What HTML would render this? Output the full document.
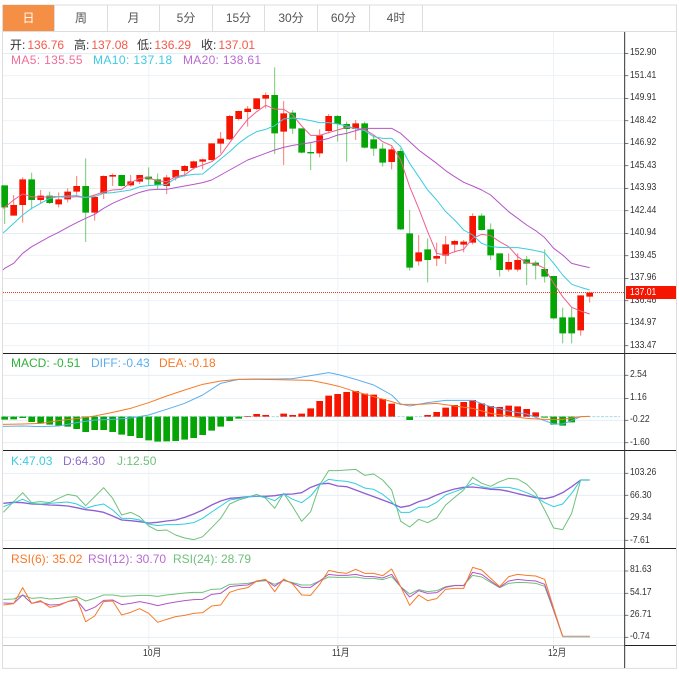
<!DOCTYPE html>
<html><head><meta charset="utf-8"><title>K线</title>
<style>
html,body{margin:0;padding:0;background:#fff;width:679px;height:679px;overflow:hidden}
#w{position:relative;width:679px;height:679px;overflow:hidden;background:#fff;font-family:"Liberation Sans","Noto Sans CJK SC",sans-serif}
svg{position:absolute;left:0;top:0;display:block}
.t{position:absolute;top:5px;height:26px;line-height:26px;text-align:center;font-size:12px;color:#555}
.l{position:absolute;font-size:12px;line-height:14px;white-space:pre}
.l span{padding-left:2px}
.a{position:absolute;left:630px;font-size:10px;line-height:12px;color:#333;white-space:pre;transform:scaleX(.86);transform-origin:left center}
.x{position:absolute;top:648px;font-size:10px;line-height:12px;color:#333;white-space:pre;transform:scaleX(.86);transform-origin:left center}
</style></head><body><div id="w">
<svg width="679" height="679" viewBox="0 0 2037 2037" fill="none">
<!-- frame -->
<path d="M7.5 15H2029.5V2005H7.5Z" stroke="#ddd" stroke-width="3"/>
<rect x="9" y="15" width="153" height="78" fill="#f58f45"/>
<path d="M9 94.5H2028M163.5 15V93M322.5 15V93M478.5 15V93M637.5 15V93M793.5 15V93M952.5 15V93M1108.5 15V93M1267.5 15V93" stroke="#ddd" stroke-width="3"/>
<!-- vertical grid -->
<path d="M446.5 96V1935M1013.5 96V1935M1660.5 96V1935" stroke="#edf3f6" stroke-width="3"/>
<!-- price grid -->
<path d="M9 160.5H1872M9 295.5H1872M9 430.5H1872M9 565.5H1872M9 700.5H1872M9 835.5H1872M9 970.5H1872" stroke="#e4edf4" stroke-width="3"/>
<path d="M9 227H1872M9 362H1872M9 497H1872M9 632H1872M9 767H1872M9 902H1872M9 1037H1872" stroke="#eef3f7" stroke-width="3"/>
<!-- macd grid -->
<path d="M9 1126H1872M9 1195.5H1872M9 1261H1872M9 1328H1872" stroke="#e8eff5" stroke-width="3"/>
<!-- kdj grid -->
<path d="M9 1420H1872M9 1486H1872M9 1555H1872M9 1621H1872" stroke="#e8eff5" stroke-width="3"/>
<!-- rsi grid -->
<path d="M9 1713H1872M9 1780H1872M9 1846H1872M9 1912H1872" stroke="#e8eff5" stroke-width="3"/>
<!-- axis ticks -->
<path d="M1875 160.5h10M1875 227h10M1875 295.5h10M1875 362h10M1875 430.5h10M1875 497h10M1875 565.5h10M1875 632h10M1875 700.5h10M1875 767h10M1875 835.5h10M1875 902h10M1875 970.5h10M1875 1037h10M1875 1126h10M1875 1195.5h10M1875 1261h10M1875 1328h10M1875 1420h10M1875 1486h10M1875 1555h10M1875 1621h10M1875 1713h10M1875 1780h10M1875 1846h10M1875 1912h10M446.5 1938v8M1013.5 1938v8M1660.5 1938v8" stroke="#777" stroke-width="3"/>

<!-- candle wicks -->
<path stroke="#f51200" stroke-width="3" opacity=".55" d="M41 585V647M68 532V668M122 570V612M176 577V622M203 565V607M230 528V590M284 585V662M311 526V597M338 520V558M392 525V560M419 525V552M500 525V582M527 510V542M554 495V530M581 482V508M608 476V508M635 430V482M662 396V460M689 345V420M716 332V362M743 318V380M770 295V330M797 277V325M851 303V495M959 388V472M986 342V400M1067 360V420M1175 440V508M1256 705V797M1310 728V798M1337 708V792M1364 720V758M1391 720V757M1418 640V733M1526 760V815M1553 760V815M1742 886V1007M1769 875V908"/>
<path stroke="#04a504" stroke-width="3" opacity=".55" d="M14 556V672M95 518V628M149 575V612M257 475V726M365 525V560M446 502V555M473 520V568M824 202V462M878 330V402M905 385V460M932 430V510M1013 345V425M1040 365V485M1094 365V445M1121 405V468M1148 430V500M1202 445V690M1229 630V812M1283 715V847M1445 640V692M1472 670V780M1499 760V830M1580 768V855M1607 782V838M1634 748V848M1661 828V958M1688 923V1030M1715 923V1030"/>
<!-- candle bodies -->
<path stroke="#f61400" stroke-width="20" d="M41 615V647M68 538V615M122 587V600M176 598V613M203 575V598M230 558V575M284 591V638M311 528V580M338 525V530M392 544V556M419 525V545M500 532V558M527 510V532M554 498V513M581 484V504M608 478V485M635 430V480M662 416V431M689 348V418M716 333V357M743 326V336M770 295V327M797 285V296M851 340V395M959 406V460M986 348V393M1067 370V387M1175 448V486M1256 757V784M1310 768V776M1337 733V767M1364 723V734M1391 725V734M1418 648V728M1526 786V809M1553 780V809M1742 886V991M1769 878V890"/>
<path stroke="#04a504" stroke-width="20" d="M14 556V622M95 538V600M149 587V609M257 558V638M365 525V558M446 530V538M473 538V556M824 285V400M878 338V386M905 385V458M932 456V460M1013 348V372M1040 372V387M1094 370V443M1121 418V446M1148 446V488M1202 453V688M1229 700V803M1283 748V780M1445 647V690M1472 688V766M1499 760V810M1580 778V791M1607 788V797M1634 807V830M1661 828V955M1688 952V1000M1715 952V1000"/>
<!-- MA -->
<polyline stroke="#ef5f8c" stroke-width="3" stroke-linejoin="round" points="9,625 14,622 41,600 68,582 95,590 122,592 149,590 176,590 203,592 230,590 257,593 284,585 311,576 338,570 365,568 392,548 419,535 446,533 473,543 500,545 527,530 554,525 581,505 608,495 635,485 662,465 689,428 716,392 743,358 770,335 797,316 824,327 851,328 878,345 905,378 932,406 959,406 986,398 1013,390 1040,382 1067,385 1094,388 1121,405 1148,425 1175,437 1202,480 1229,560 1256,625 1283,695 1310,760 1337,765 1364,755 1391,748 1418,715 1445,703 1472,707 1499,725 1526,740 1553,770 1580,788 1607,792 1634,805 1661,850 1688,890 1715,922 1742,933 1769,942"/>
<polyline stroke="#3ccbe0" stroke-width="3" stroke-linejoin="round" points="9,698 14,695 41,670 68,645 95,625 122,610 149,595 176,590 203,588 230,587 257,592 284,590 311,580 338,578 365,574 392,570 419,560 446,557 473,555 500,553 527,535 554,527 581,523 608,522 635,500 662,477 689,455 716,430 743,410 770,395 797,388 824,377 851,357 878,354 905,357 932,362 959,368 986,368 1013,372 1040,378 1067,386 1094,392 1121,410 1148,415 1175,415 1202,440 1229,490 1256,530 1283,570 1310,600 1337,635 1364,660 1391,690 1418,705 1445,730 1472,740 1499,742 1526,743 1553,743 1580,747 1607,752 1634,758 1661,790 1688,825 1715,853 1742,862 1769,870"/>
<polyline stroke="#b455c8" stroke-width="3" stroke-linejoin="round" points="9,810 14,805 41,790 68,760 95,740 122,725 149,710 176,697 203,682 230,668 257,655 284,643 311,625 338,610 365,598 392,587 419,577 446,570 473,568 500,568 527,563 554,558 581,553 608,548 635,540 662,525 689,510 716,495 743,480 770,470 797,460 824,450 851,442 878,436 905,432 932,428 959,422 986,415 1013,405 1040,400 1067,392 1094,385 1121,385 1148,385 1175,385 1202,400 1229,425 1256,450 1283,470 1310,490 1337,512 1364,530 1391,547 1418,558 1445,570 1472,585 1499,610 1526,635 1553,655 1580,675 1607,692 1634,713 1661,745 1688,765 1715,790 1742,797 1769,803"/>
<!-- last price dotted -->
<path d="M9 877.5H1872" stroke="#f33a2a" stroke-width="3" stroke-dasharray="3 3"/>

<!-- MACD -->
<g transform="translate(0 1050)">
<path d="M9 200H1860" stroke="#a4dcec" stroke-width="3" stroke-dasharray="9 4"/>
<path stroke="#04a504" stroke-width="20" d="M14 200V209M41 200V208M68 200V204M95 200V216M122 200V221M149 200V224M176 200V227M203 200V230M230 200V237M257 200V246M284 200V240M311 200V240M338 200V246M365 200V254M392 200V258M419 200V264M446 200V271M473 200V275M500 200V274M527 200V273M554 200V269M581 200V264M608 200V255M635 200V242M662 200V230M689 200V213M716 200V206M1229 200V210M1634 200V203M1661 200V224M1688 200V227M1715 200V217"/>
<path stroke="#f61400" stroke-width="20" d="M743 198V200M770 192V200M797 195V200M851 191V200M878 195V200M905 191V200M932 175V200M959 153V200M986 137V200M1013 132V200M1040 126V200M1067 123V200M1094 131V200M1121 134V200M1148 147V200M1175 161V200M1283 195V200M1310 186V200M1337 173V200M1364 165V200M1391 156V200M1418 150V200M1445 160V200M1472 168V200M1499 171V200M1526 167V200M1553 169V200M1580 177V200M1607 187V200"/>
<polyline stroke="#5aaef0" stroke-width="3" stroke-linejoin="round" points="9,229 68,228 122,230 176,228 230,218 284,210 338,208 392,204 446,195 500,178 554,160 608,135 662,100 716,88 770,87 824,87 878,86 932,77 986,68 1020,75 1067,88 1121,105 1175,135 1202,162 1229,168 1283,158 1337,151 1418,151 1472,170 1526,183 1580,192 1634,212 1661,222 1688,222 1715,212 1742,200 1769,199"/>
<polyline stroke="#f77a28" stroke-width="3" stroke-linejoin="round" points="9,223 68,222 122,220 176,212 230,206 284,198 338,187 392,175 446,158 500,138 554,120 608,103 662,93 716,88 770,88 824,89 878,90 932,91 986,102 1020,110 1067,125 1121,140 1175,155 1202,163 1256,163 1310,160 1364,168 1418,175 1472,190 1526,198 1580,205 1634,208 1688,208 1742,200 1769,199"/>
</g>

<!-- KDJ -->
<g transform="translate(0 1350)" stroke-width="3" stroke-linejoin="round">
<polyline stroke="#6fc07a" points="10,187 41,155 68,128 95,158 122,155 149,158 176,145 203,133 230,138 257,167 284,140 311,113 338,145 365,195 392,187 419,200 446,228 473,242 500,240 527,255 554,264 581,269 608,260 635,233 662,205 689,162 716,150 743,142 770,133 797,145 824,175 851,130 878,170 905,214 932,185 959,105 986,62 1013,62 1040,60 1067,58 1094,76 1121,72 1148,90 1175,120 1202,214 1229,231 1256,208 1283,218 1310,204 1337,165 1364,142 1391,120 1418,82 1445,100 1472,109 1499,95 1526,85 1553,87 1580,103 1607,130 1634,180 1661,234 1688,239 1715,190 1742,90 1769,90"/>
<polyline stroke="#8f5fd0" stroke-width="4" points="10,160 41,157 68,158 95,162 122,163 149,165 176,166 203,168 230,173 257,179 284,182 311,187 338,198 365,210 392,212 419,215 446,219 473,217 500,213 527,210 554,202 581,192 608,180 635,165 662,153 689,145 716,143 743,140 770,139 797,139 824,137 851,133 878,132 905,128 932,112 959,102 986,100 1013,108 1040,110 1067,120 1094,130 1121,140 1148,150 1175,160 1202,172 1229,167 1256,155 1283,147 1310,135 1337,125 1364,117 1391,112 1418,111 1445,114 1472,118 1499,119 1526,124 1553,131 1580,137 1607,143 1634,146 1661,140 1688,128 1715,110 1742,90 1769,90"/>
<polyline stroke="#30cde0" points="10,170 41,158 68,148 95,160 122,162 149,160 176,158 203,156 230,162 257,175 284,167 311,162 338,180 365,205 392,205 419,210 446,222 473,227 500,224 527,224 554,222 581,218 608,205 635,186 662,168 689,150 716,146 743,140 770,138 797,142 824,152 851,132 878,148 905,158 932,138 959,105 986,88 1013,92 1040,94 1067,101 1094,114 1121,118 1148,133 1175,155 1202,187 1229,187 1256,172 1283,171 1310,157 1337,135 1364,125 1391,115 1418,100 1445,110 1472,115 1499,112 1526,112 1553,118 1580,128 1607,140 1634,158 1661,170 1688,162 1715,130 1742,90 1769,90"/>
</g>

<!-- RSI -->
<g transform="translate(0 1635)" stroke-width="3" stroke-linejoin="round">
<polyline stroke="#6fc07a" points="10,163 41,162 68,150 95,160 122,158 149,162 176,160 203,157 230,155 257,168 284,160 311,150 338,150 365,154 392,153 419,151 446,151 473,154 500,150 527,147 554,144 581,142 608,142 635,133 662,132 689,118 716,117 743,115 770,110 797,107 824,118 851,107 878,113 905,120 932,120 959,108 986,96 1013,97 1040,97 1067,96 1094,100 1121,100 1148,104 1175,95 1202,125 1229,147 1256,134 1283,140 1310,137 1337,125 1364,121 1391,121 1418,91 1445,96 1472,112 1499,128 1526,115 1553,112 1580,113 1607,115 1634,124 1661,197 1688,274 1715,275 1742,275 1769,275"/>
<polyline stroke="#b455c8" points="10,174 41,175 68,150 95,175 122,170 149,180 176,179 203,170 230,165 257,198 284,187 311,166 338,165 365,179 392,175 419,170 446,175 473,182 500,176 527,171 554,167 581,164 608,163 635,148 662,145 689,125 716,122 743,120 770,108 797,105 824,124 851,104 878,115 905,127 932,127 959,108 986,88 1013,91 1040,91 1067,88 1094,94 1121,95 1148,99 1175,88 1202,125 1229,156 1256,137 1283,145 1310,143 1337,127 1364,122 1391,122 1418,82 1445,88 1472,108 1499,127 1526,108 1553,103 1580,106 1607,108 1634,118 1661,195 1688,274 1715,274 1742,274 1769,274"/>
<polyline stroke="#f77a28" points="10,180 41,176 68,128 95,175 122,167 149,187 176,182 203,170 230,160 257,230 284,213 311,170 338,168 365,210 392,202 419,191 446,205 473,232 500,223 527,215 554,211 581,205 608,203 635,183 662,180 689,142 716,133 743,128 770,108 797,103 824,140 851,102 878,117 905,150 932,151 959,118 986,76 1013,82 1040,85 1067,73 1094,85 1121,85 1148,92 1175,72 1202,125 1229,181 1256,150 1283,167 1310,161 1337,133 1364,130 1391,130 1418,67 1445,75 1472,100 1499,125 1526,95 1553,88 1580,91 1607,93 1634,103 1661,190 1688,274 1715,274 1742,274 1769,274"/>
<path d="M1688 275H1769" stroke="#b0ae98" stroke-width="4"/>
</g>

<!-- panel lines -->
<path d="M9 1060.5H2028M9 1351.5H2028M9 1645.5H2028M1874 1936.5H2028" stroke="#222" stroke-width="3"/>
<path d="M9 1936.5H1873" stroke="#c4c4c4" stroke-width="3"/>
<path d="M1874 96V2004" stroke="#333" stroke-width="3"/>
</svg>

<!-- tabs -->
<div class="t" style="left:3px;width:51px;color:#fff">日</div>
<div class="t" style="left:55px;width:52px">周</div>
<div class="t" style="left:108px;width:51px">月</div>
<div class="t" style="left:160px;width:52px">5分</div>
<div class="t" style="left:213px;width:51px">15分</div>
<div class="t" style="left:265px;width:52px">30分</div>
<div class="t" style="left:318px;width:51px">60分</div>
<div class="t" style="left:370px;width:52px">4时</div>

<!-- legends -->
<div class="l" style="left:10px;top:38px;color:#333">开:<span style="color:#f5584a">136.76</span></div>
<div class="l" style="left:74px;top:38px;color:#333">高:<span style="color:#f5584a">137.08</span></div>
<div class="l" style="left:137px;top:38px;color:#333">低:<span style="color:#f5584a">136.29</span></div>
<div class="l" style="left:201px;top:38px;color:#333">收:<span style="color:#f5584a">137.01</span></div>
<div class="l" style="left:11px;top:53px;color:#ef6e97;letter-spacing:.35px">MA5: 135.55</div>
<div class="l" style="left:93px;top:53px;color:#3ccbe0;letter-spacing:.4px">MA10: 137.18</div>
<div class="l" style="left:183px;top:53px;color:#b96ad0;letter-spacing:.3px">MA20: 138.61</div>

<div class="l" style="left:11px;top:356px;color:#2db13a">MACD: -0.51</div>
<div class="l" style="left:91px;top:356px;color:#5aaef0;word-spacing:-2px">DIFF: -0.43</div>
<div class="l" style="left:159px;top:356px;color:#f77a28;word-spacing:-2px">DEA: -0.18</div>

<div class="l" style="left:11px;top:454px;color:#3ccbe0">K:47.03</div>
<div class="l" style="left:63px;top:454px;color:#8f6cc8">D:64.30</div>
<div class="l" style="left:117px;top:454px;color:#6fc07a">J:12.50</div>

<div class="l" style="left:11px;top:552px;color:#f77a28">RSI(6): 35.02</div>
<div class="l" style="left:88px;top:552px;color:#b96ad0">RSI(12): 30.70</div>
<div class="l" style="left:173px;top:552px;color:#6fc07a">RSI(24): 28.79</div>

<!-- axis labels -->
<div class="a" style="top:47px">152.90</div>
<div class="a" style="top:70px">151.41</div>
<div class="a" style="top:92px">149.91</div>
<div class="a" style="top:115px">148.42</div>
<div class="a" style="top:137px">146.92</div>
<div class="a" style="top:160px">145.43</div>
<div class="a" style="top:182px">143.93</div>
<div class="a" style="top:205px">142.44</div>
<div class="a" style="top:227px">140.94</div>
<div class="a" style="top:250px">139.45</div>
<div class="a" style="top:272px">137.96</div>
<div class="a" style="top:295px">136.46</div>
<div class="a" style="top:317px">134.97</div>
<div class="a" style="top:340px">133.47</div>
<div style="position:absolute;left:626px;top:286px;width:50px;height:13px;background:#f51500"></div>
<div class="a" style="top:287px;color:#fff">137.01</div>

<div class="a" style="top:369px">2.54</div>
<div class="a" style="top:392px">1.16</div>
<div class="a" style="top:414px">-0.22</div>
<div class="a" style="top:437px">-1.60</div>

<div class="a" style="top:467px">103.26</div>
<div class="a" style="top:490px">66.30</div>
<div class="a" style="top:512px">29.34</div>
<div class="a" style="top:535px">-7.61</div>

<div class="a" style="top:564px">81.63</div>
<div class="a" style="top:587px">54.17</div>
<div class="a" style="top:609px">26.71</div>
<div class="a" style="top:631px">-0.74</div>

<div class="x" style="left:143px">10月</div>
<div class="x" style="left:332px">11月</div>
<div class="x" style="left:548px">12月</div>
</div></body></html>
